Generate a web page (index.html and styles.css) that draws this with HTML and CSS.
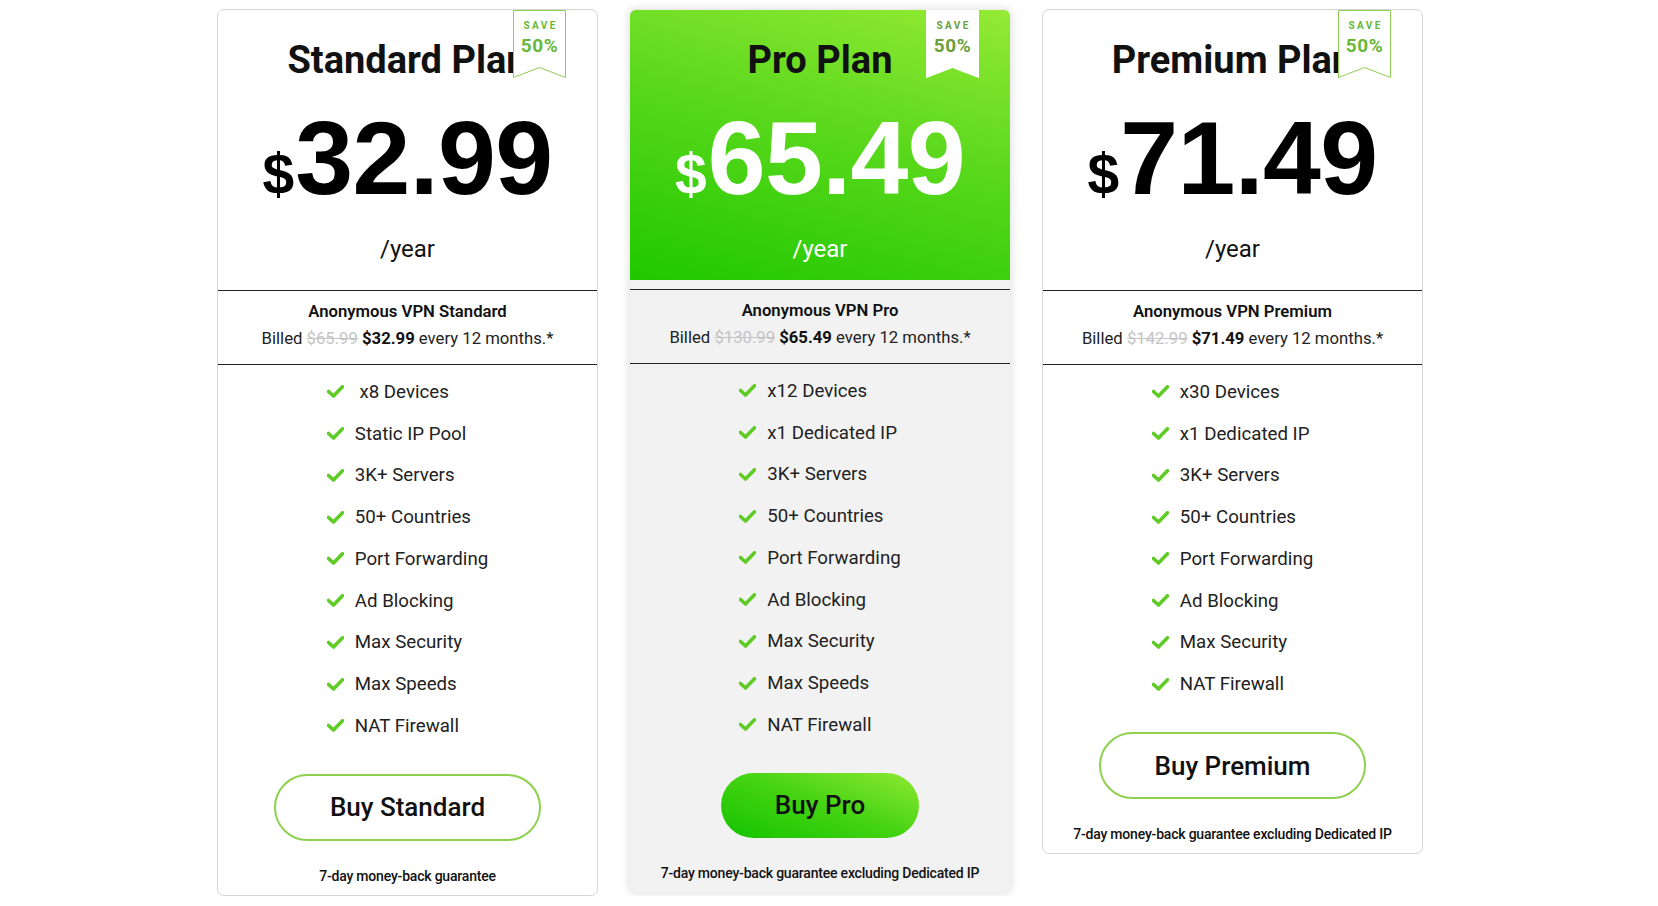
FILE: index.html
```html
<!DOCTYPE html>
<html lang="en">
<head>
<meta charset="utf-8">
<title>VPN Plans</title>
<link rel="stylesheet" href="styles.css">
</head>
<body>
<div class="plans">
  <div class="card">
    <div class="ribbon">
      <svg class="ribbon-shape" width="53" height="68" viewBox="0 0 53 68"><polygon points="0.5,0.5 52.5,0.5 52.5,67.5 26.5,57.5 0.5,67.5" /></svg>
      <span class="save">SAVE</span>
      <span class="pct">50%</span>
    </div>
    <div class="head">
      <h2 class="title">Standard Plan</h2>
      <div class="price"><span class="cur">$</span><span class="amt">32.99</span></div>
      <div class="per">/year</div>
    </div>
    <div class="billing">
      <div class="bname">Anonymous VPN Standard</div>
      <div class="bline">Billed <s>$65.99</s> <b>$32.99</b> every 12 months.*</div>
    </div>
    <ul class="feats">
      <li><svg class="chk" viewBox="0 0 17 13"><path d="M1.5 6.5 L6.5 11 L15.5 1.8" /></svg>&nbsp;x8 Devices</li>
      <li><svg class="chk" viewBox="0 0 17 13"><path d="M1.5 6.5 L6.5 11 L15.5 1.8" /></svg>Static IP Pool</li>
      <li><svg class="chk" viewBox="0 0 17 13"><path d="M1.5 6.5 L6.5 11 L15.5 1.8" /></svg>3K+ Servers</li>
      <li><svg class="chk" viewBox="0 0 17 13"><path d="M1.5 6.5 L6.5 11 L15.5 1.8" /></svg>50+ Countries</li>
      <li><svg class="chk" viewBox="0 0 17 13"><path d="M1.5 6.5 L6.5 11 L15.5 1.8" /></svg>Port Forwarding</li>
      <li><svg class="chk" viewBox="0 0 17 13"><path d="M1.5 6.5 L6.5 11 L15.5 1.8" /></svg>Ad Blocking</li>
      <li><svg class="chk" viewBox="0 0 17 13"><path d="M1.5 6.5 L6.5 11 L15.5 1.8" /></svg>Max Security</li>
      <li><svg class="chk" viewBox="0 0 17 13"><path d="M1.5 6.5 L6.5 11 L15.5 1.8" /></svg>Max Speeds</li>
      <li><svg class="chk" viewBox="0 0 17 13"><path d="M1.5 6.5 L6.5 11 L15.5 1.8" /></svg>NAT Firewall</li>
    </ul>
    <a class="buy" href="#">Buy Standard</a>
    <div class="guar">7-day money-back guarantee</div>
  </div>

  <div class="card pro">
    <div class="ribbon">
      <svg class="ribbon-shape" width="53" height="68" viewBox="0 0 53 68"><polygon points="0.5,0.5 52.5,0.5 52.5,67.5 26.5,57.5 0.5,67.5" /></svg>
      <span class="save">SAVE</span>
      <span class="pct">50%</span>
    </div>
    <div class="head">
      <h2 class="title">Pro Plan</h2>
      <div class="price"><span class="cur">$</span><span class="amt">65.49</span></div>
      <div class="per">/year</div>
    </div>
    <div class="billing">
      <div class="bname">Anonymous VPN Pro</div>
      <div class="bline">Billed <s>$130.99</s> <b>$65.49</b> every 12 months.*</div>
    </div>
    <ul class="feats">
      <li><svg class="chk" viewBox="0 0 17 13"><path d="M1.5 6.5 L6.5 11 L15.5 1.8" /></svg>x12 Devices</li>
      <li><svg class="chk" viewBox="0 0 17 13"><path d="M1.5 6.5 L6.5 11 L15.5 1.8" /></svg>x1 Dedicated IP</li>
      <li><svg class="chk" viewBox="0 0 17 13"><path d="M1.5 6.5 L6.5 11 L15.5 1.8" /></svg>3K+ Servers</li>
      <li><svg class="chk" viewBox="0 0 17 13"><path d="M1.5 6.5 L6.5 11 L15.5 1.8" /></svg>50+ Countries</li>
      <li><svg class="chk" viewBox="0 0 17 13"><path d="M1.5 6.5 L6.5 11 L15.5 1.8" /></svg>Port Forwarding</li>
      <li><svg class="chk" viewBox="0 0 17 13"><path d="M1.5 6.5 L6.5 11 L15.5 1.8" /></svg>Ad Blocking</li>
      <li><svg class="chk" viewBox="0 0 17 13"><path d="M1.5 6.5 L6.5 11 L15.5 1.8" /></svg>Max Security</li>
      <li><svg class="chk" viewBox="0 0 17 13"><path d="M1.5 6.5 L6.5 11 L15.5 1.8" /></svg>Max Speeds</li>
      <li><svg class="chk" viewBox="0 0 17 13"><path d="M1.5 6.5 L6.5 11 L15.5 1.8" /></svg>NAT Firewall</li>
    </ul>
    <a class="buy" href="#">Buy Pro</a>
    <div class="guar">7-day money-back guarantee excluding Dedicated IP</div>
  </div>

  <div class="card">
    <div class="ribbon">
      <svg class="ribbon-shape" width="53" height="68" viewBox="0 0 53 68"><polygon points="0.5,0.5 52.5,0.5 52.5,67.5 26.5,57.5 0.5,67.5" /></svg>
      <span class="save">SAVE</span>
      <span class="pct">50%</span>
    </div>
    <div class="head">
      <h2 class="title">Premium Plan</h2>
      <div class="price"><span class="cur">$</span><span class="amt">71.49</span></div>
      <div class="per">/year</div>
    </div>
    <div class="billing">
      <div class="bname">Anonymous VPN Premium</div>
      <div class="bline">Billed <s>$142.99</s> <b>$71.49</b> every 12 months.*</div>
    </div>
    <ul class="feats">
      <li><svg class="chk" viewBox="0 0 17 13"><path d="M1.5 6.5 L6.5 11 L15.5 1.8" /></svg>x30 Devices</li>
      <li><svg class="chk" viewBox="0 0 17 13"><path d="M1.5 6.5 L6.5 11 L15.5 1.8" /></svg>x1 Dedicated IP</li>
      <li><svg class="chk" viewBox="0 0 17 13"><path d="M1.5 6.5 L6.5 11 L15.5 1.8" /></svg>3K+ Servers</li>
      <li><svg class="chk" viewBox="0 0 17 13"><path d="M1.5 6.5 L6.5 11 L15.5 1.8" /></svg>50+ Countries</li>
      <li><svg class="chk" viewBox="0 0 17 13"><path d="M1.5 6.5 L6.5 11 L15.5 1.8" /></svg>Port Forwarding</li>
      <li><svg class="chk" viewBox="0 0 17 13"><path d="M1.5 6.5 L6.5 11 L15.5 1.8" /></svg>Ad Blocking</li>
      <li><svg class="chk" viewBox="0 0 17 13"><path d="M1.5 6.5 L6.5 11 L15.5 1.8" /></svg>Max Security</li>
      <li><svg class="chk" viewBox="0 0 17 13"><path d="M1.5 6.5 L6.5 11 L15.5 1.8" /></svg>NAT Firewall</li>
    </ul>
    <a class="buy" href="#">Buy Premium</a>
    <div class="guar">7-day money-back guarantee excluding Dedicated IP</div>
  </div>
</div>
</body>
</html>
```

FILE: styles.css
```css
html, body {
  margin: 0;
  padding: 0;
  background: #ffffff;
}

body {
  font-family: Roboto, "Liberation Sans", Arial, sans-serif;
  color: #111;
}

.plans {
  display: flex;
  align-items: flex-start;
  gap: 31px;
  padding: 9px 0 0 217px;
}

.card {
  position: relative;
  width: 381px;
  box-sizing: border-box;
  border: 1px solid #d6d6d6;
  border-radius: 7px;
  background: #fff;
}

.card.pro {
  width: 382px;
  border-color: #ececec;
  background: #f2f2f2;
  box-shadow: 0 0 10px rgba(0, 0, 0, 0.14);
}

/* ribbon */
.ribbon {
  position: absolute;
  top: 0;
  right: 31px;
  width: 53px;
  height: 68px;
  z-index: 2;
}

.ribbon-shape {
  position: absolute;
  left: 0;
  top: 0;
  display: block;
}

.ribbon-shape polygon {
  fill: #fff;
  stroke: #8fcf55;
  stroke-width: 1;
}

.pro .ribbon-shape polygon {
  stroke: #ffffff;
}

.save,
.pct {
  position: absolute;
  left: 0;
  width: 100%;
  text-align: center;
  font-family: Roboto, sans-serif;
  font-weight: 700;
  color: #68b83a;
}

.save {
  top: 10px;
  font-size: 10px;
  line-height: 12px;
  letter-spacing: 2.4px;
  text-indent: 2.4px;
}

.pct {
  top: 25px;
  font-size: 19px;
  line-height: 22px;
  letter-spacing: 0.6px;
}

.pro .save,
.pro .pct {
  color: #6c9e3c;
}

/* header */
.head {
  padding: 27px 0 27px;
  text-align: center;
}

.pro .head {
  padding-bottom: 17px;
  border-radius: 6px 6px 0 0;
  background: linear-gradient(195deg, #95ea34 0%, #5ad81c 45%, #1fc800 100%);
}

.title {
  margin: 0;
  font-family: Roboto, sans-serif;
  font-weight: 700;
  font-size: 38px;
  line-height: 46px;
  color: #111;
}

.price {
  margin-top: 25px;
  height: 100px;
  display: flex;
  justify-content: center;
  align-items: baseline;
  font-family: "Liberation Sans", Arial, sans-serif;
  font-weight: 700;
  color: #000;
}

.pro .price {
  color: #fff;
}

.cur {
  font-size: 57px;
  line-height: 1;
  margin-right: 1px;
}

.amt {
  font-size: 104px;
  line-height: 100px;
  letter-spacing: -0.6px;
}

.per {
  margin-top: 27px;
  font-size: 24px;
  line-height: 28px;
  color: #111;
}

.pro .per {
  color: #fff;
}

/* billing */
.billing {
  border-top: 1px solid #222;
  border-bottom: 1px solid #222;
  padding: 10px 0 13px;
  text-align: center;
}

.pro .billing {
  margin-top: 9px;
}

.bname {
  font-size: 16.7px;
  line-height: 22px;
  font-weight: 600;
  color: #111;
}

.bline {
  margin-top: 4px;
  font-size: 16.7px;
  line-height: 24px;
  color: #222;
}

.bline s {
  color: #c4c4c4;
}

.bline b {
  font-weight: 700;
  color: #111;
}

/* features */
.feats {
  list-style: none;
  margin: 0 auto;
  padding: 6px 0 0;
  width: fit-content;
}

.feats li {
  display: flex;
  align-items: center;
  height: 41.75px;
  font-size: 18.7px;
  color: #222;
  white-space: pre;
}

.chk {
  width: 17px;
  height: 13px;
  margin-right: 11px;
  flex: none;
}

.chk path {
  fill: none;
  stroke: #5fcb25;
  stroke-width: 3.6;
  stroke-linecap: round;
  stroke-linejoin: round;
}

/* buttons */
.buy {
  display: flex;
  align-items: center;
  justify-content: center;
  box-sizing: border-box;
  width: 267px;
  height: 67px;
  margin: 27px auto 0;
  border: 2px solid #8fd14f;
  border-radius: 34px;
  font-size: 26px;
  font-weight: 500;
  color: #111;
  text-decoration: none;
  background: #fff;
}

.pro .buy {
  width: 198px;
  height: 65px;
  border: none;
  border-radius: 33px;
  background: linear-gradient(200deg, #8fe932 0%, #44d312 50%, #14c300 100%);
}

.guar {
  margin-top: 25px;
  padding-bottom: 9px;
  text-align: center;
  font-size: 14px;
  line-height: 20px;
  font-weight: 500;
  color: #111;
  letter-spacing: -0.2px;
}
```
